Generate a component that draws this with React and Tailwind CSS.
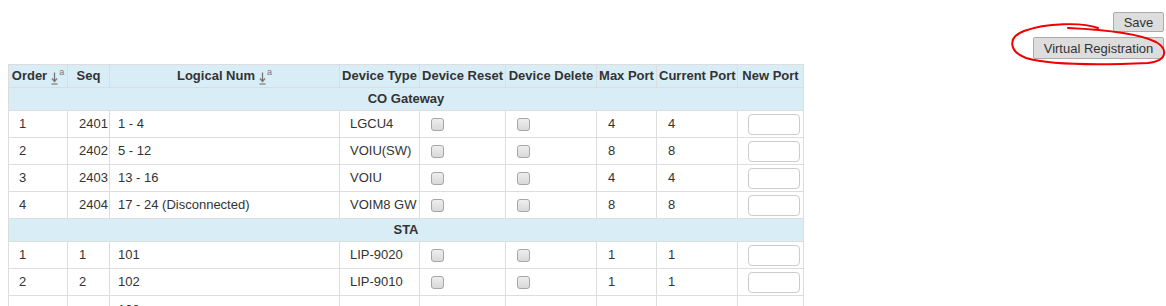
const font = { fontFamily: '"Liberation Sans", Arial, sans-serif' }

const groups = [
  {
    name: 'CO Gateway',
    rows: [
      { order: '1', seq: '2401', logical: '1 - 4', type: 'LGCU4', max: '4', cur: '4' },
      { order: '2', seq: '2402', logical: '5 - 12', type: 'VOIU(SW)', max: '8', cur: '8' },
      { order: '3', seq: '2403', logical: '13 - 16', type: 'VOIU', max: '4', cur: '4' },
      { order: '4', seq: '2404', logical: '17 - 24 (Disconnected)', type: 'VOIM8 GW', max: '8', cur: '8' },
    ],
  },
  {
    name: 'STA',
    rows: [
      { order: '1', seq: '1', logical: '101', type: 'LIP-9020', max: '1', cur: '1' },
      { order: '2', seq: '2', logical: '102', type: 'LIP-9010', max: '1', cur: '1' },
      { order: '3', seq: '3', logical: '103', type: 'LIP-9010', max: '1', cur: '1', tall: true },
    ],
  },
]

function SortIcon() {
  return (
    <span className="ml-[4px] inline-flex items-start text-[#777]">
      <svg width="7" height="14" viewBox="0 0 7 14" className="mt-[3px]">
        <path d="M3.5 1.5v8.5M1 7.5l2.5 3 2.5-3" fill="none" stroke="#777" strokeWidth="1.3" />
        <path d="M0.5 13h6" stroke="#777" strokeWidth="1.2" />
      </svg>
      <span className="ml-[1px] text-[9px] font-normal leading-[9px]">a</span>
    </span>
  )
}

function Check() {
  return <span className="inline-block h-[13px] w-[13px] rounded-[3px] border border-[#a6a6a6] bg-gradient-to-b from-[#eeeeee] to-[#d9d9d9] align-middle" />
}

const th = 'border border-[#dddddd] px-[2px] text-center align-middle font-bold whitespace-nowrap'
const td = 'border border-[#dddddd] px-[10px] align-middle whitespace-nowrap'

export default function App() {
  return (
    <div className="relative w-full bg-white text-[13px] text-[#333333]" style={font}>
      <div className="flex flex-col items-end gap-[5px] pr-[2px] pt-[12px]">
        <button className="h-[20px] w-[51px] rounded-[2px] border border-[#ababab] bg-[#dddddd] text-[13px] leading-none text-[#333]">
          Save
        </button>
        <button className="h-[22px] w-[131px] rounded-[2px] border border-[#ababab] bg-[#dddddd] text-[13px] leading-none text-[#333]">
          Virtual Registration
        </button>
      </div>

      <svg className="pointer-events-none absolute left-[1000px] top-[15px]" width="166" height="55" viewBox="0 0 166 55">
        <path
          d="M98 13 C82 7, 46 8, 24 16 C8 22, 8 36, 26 43 C50 50, 102 50, 148 48 C168 46, 168 34, 156 27 C140 19, 112 15, 68 13"
          fill="none"
          stroke="#ee0000"
          strokeWidth="2"
          strokeLinecap="round"
        />
      </svg>

      <table className="ml-[8px] mt-[5px] w-[796px] table-fixed border-collapse">
        <colgroup>
          <col className="w-[59px]" />
          <col className="w-[42px]" />
          <col className="w-[230px]" />
          <col className="w-[80px]" />
          <col className="w-[86px]" />
          <col className="w-[91px]" />
          <col className="w-[60px]" />
          <col className="w-[81px]" />
          <col className="w-[66px]" />
        </colgroup>
        <thead>
          <tr className="h-[23px] bg-[#d9edf7]">
            <th className={th}>
              <span className="inline-flex items-center">Order<SortIcon /></span>
            </th>
            <th className={th}>Seq</th>
            <th className={th}>
              <span className="inline-flex items-center">Logical Num<SortIcon /></span>
            </th>
            <th className={th}>Device Type</th>
            <th className={th}>Device Reset</th>
            <th className={th}>Device Delete</th>
            <th className={th}>Max Port</th>
            <th className={th}>Current Port</th>
            <th className={th}>New Port</th>
          </tr>
        </thead>
        <tbody>
          {groups.map((g) => [
            <tr key={g.name} className="h-[23px] bg-[#d9edf7]">
              <td colSpan={9} className="border border-[#dddddd] text-center align-middle font-bold">
                {g.name}
              </td>
            </tr>,
            ...g.rows.map((r) => (
              <tr key={g.name + r.order} className="h-[27px]">
                <td className={td}>{r.order}</td>
                <td className={td + ' !pl-[11px] !pr-0'}>{r.seq}</td>
                <td className={td + ' !pl-[8px]' + (r.tall ? ' !align-top pt-[4px]' : '')}>
                  {r.logical}
                  {r.tall ? (
                    <>
                      <br />
                      &nbsp;
                      <br />
                      &nbsp;
                      <br />
                      &nbsp;
                    </>
                  ) : null}
                </td>
                <td className={td}>{r.type}</td>
                <td className={td + ' !pl-[11px]'}>
                  <Check />
                </td>
                <td className={td + ' !pl-[11px]'}>
                  <Check />
                </td>
                <td className={td + ' !pl-[11px]'}>{r.max}</td>
                <td className={td + ' !pl-[11px]'}>{r.cur}</td>
                <td className="border border-[#dddddd] pl-[10px] pr-[2px] align-middle">
                  <input className="block h-[21px] w-[52px] rounded-[4px] border border-[#cccccc] bg-white" />
                </td>
              </tr>
            )),
          ])}
        </tbody>
      </table>
    </div>
  )
}
